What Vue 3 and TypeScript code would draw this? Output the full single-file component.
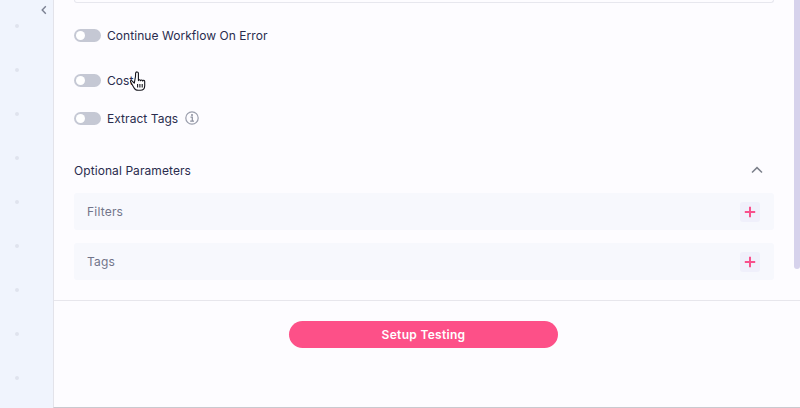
<template>
  <div class="page">
    <!-- 左侧栏 -->
    <aside class="sidebar">
      <span v-for="n in 9" :key="n" class="dot"></span>
      <svg class="collapse" width="8" height="10" viewBox="0 0 8 10" fill="none">
        <path d="M5.8 1.2 2.2 5l3.6 3.8" stroke="#7b8092" stroke-width="1.4" />
      </svg>
    </aside>

    <main class="main">
      <div class="form">
        <div class="input-stub"></div>

        <div class="toggle-row first">
          <span class="toggle"><span class="knob"></span></span>
          <span class="label">Continue Workflow On Error</span>
        </div>
        <div class="toggle-row second">
          <span class="toggle"><span class="knob"></span></span>
          <span class="label">Cost</span>
        </div>
        <div class="toggle-row third">
          <span class="toggle"><span class="knob"></span></span>
          <span class="label">Extract Tags</span>
          <svg class="info" width="14" height="14" viewBox="0 0 14 14" fill="none">
            <circle cx="7" cy="7" r="6.2" stroke="#9a9eac" stroke-width="1.2" />
            <path d="M5.5 6.2H7.3V10M5.2 10.2h3.8" stroke="#8b8f9e" stroke-width="1.2" />
            <circle cx="7" cy="3.9" r="1" fill="#8b8f9e" />
          </svg>
        </div>

        <div class="section-head">
          <span class="section-title">Optional Parameters</span>
          <svg width="12" height="8" viewBox="0 0 12 8" fill="none">
            <path d="M1 6.5 6 1.6l5 4.9" stroke="#7c808b" stroke-width="1.5" />
          </svg>
        </div>

        <div v-for="item in params" :key="item" class="param">
          <span>{{ item }}</span>
          <span class="add">
            <svg width="12" height="12" viewBox="0 0 12 12" fill="none">
              <path d="M6 .8v10.4M.8 6h10.4" stroke="#f8508c" stroke-width="2" />
            </svg>
          </span>
        </div>
      </div>

      <div class="footer">
        <button class="primary" type="button">Setup Testing</button>
      </div>

      <!-- 滚动条 -->
      <div class="scrollbar"></div>

      <!-- 鼠标指针 -->
      <svg class="cursor" width="16" height="20" viewBox="0 0 16 20">
        <path
          d="M4.3 12.2 2 9.8c-.9-.8-1.9.2-1.3 1.2l3.1 5.4c.9 1.6 2.2 2.9 4.3 2.9h2.3c2.7 0 4.3-1.9 4.3-4.6v-4.3c0-1.4-1.8-1.5-2-.3 0-1.4-1.9-1.5-2.2-.3 0-1.4-1.9-1.4-2.1-.2V2.2C8.4.6 5.9.4 5.6 2.2l-.1 3.3Z"
          fill="#fff"
          stroke="#15151c"
          stroke-width="1.1"
          stroke-linejoin="round"
        />
        <path d="M7.6 13v3.4M9.9 13v3.4M12.2 13v3.4" stroke="#15151c" stroke-width="1.1" />
      </svg>
    </main>
  </div>
</template>

<script setup lang="ts">
const params: string[] = ['Filters', 'Tags']
</script>

<style>
html,
body {
  margin: 0;
  background: #fdfcff;
}
</style>

<style scoped>
.page {
  display: flex;
  width: 800px;
  height: 408px;
  overflow: hidden;
  font-family: Inter, 'Liberation Sans', sans-serif;
}

/* ==================== 左侧栏 ==================== */
.sidebar {
  position: relative;
  box-sizing: border-box;
  flex: 0 0 53px;
  display: flex;
  flex-direction: column;
  align-items: flex-start;
  gap: 40px;
  padding: 24px 0 0 15px;
  background: #f0f4fd;
}

.dot {
  flex: none;
  width: 4px;
  height: 4px;
  border-radius: 50%;
  background: #e0e3ee;
}

.collapse {
  position: absolute;
  top: 5px;
  left: 40px;
}

/* ==================== 主区域 ==================== */
.main {
  position: relative;
  flex: 1;
  display: flex;
  flex-direction: column;
  box-sizing: border-box;
  border-left: 1px solid #e3e3ea;
  border-bottom: 1px solid #c9c9cf;
  background: #fdfcff;
}

.form {
  box-sizing: border-box;
  height: 301px;
  padding: 0 26px 0 20px;
  border-bottom: 1px solid #e7e6ec;
}

.input-stub {
  box-sizing: border-box;
  height: 3px;
  border: 1px solid #e7e7ee;
  border-top: none;
  border-radius: 0 0 4px 4px;
}

.toggle-row {
  display: flex;
  align-items: center;
  gap: 6px;
  height: 20px;
}

.toggle-row.first {
  margin-top: 22px;
}

.toggle-row.second {
  margin-top: 25px;
}

.toggle-row.third {
  margin-top: 18px;
}

.toggle {
  display: flex;
  align-items: center;
  box-sizing: border-box;
  width: 27px;
  height: 13px;
  padding-left: 2px;
  border-radius: 7px;
  background: #c5c8d4;
}

.knob {
  width: 9px;
  height: 9px;
  border-radius: 50%;
  background: #fff;
}

.label {
  font-size: 12px;
  font-weight: 400;
  letter-spacing: 0.05px;
  color: #2a2c4e;
}

.info {
  margin-left: 1px;
}

.section-head {
  display: flex;
  align-items: center;
  justify-content: space-between;
  height: 20px;
  margin: 32px 5px 13px 0;
  padding-right: 6px;
}

.section-title {
  font-size: 12px;
  font-weight: 400;
  letter-spacing: 0.08px;
  color: #2a2c4e;
}

.param {
  display: flex;
  align-items: center;
  justify-content: space-between;
  box-sizing: border-box;
  height: 37px;
  margin-bottom: 13px;
  padding: 0 14px 0 13px;
  border-radius: 3px;
  background: #f7f8fd;
  font-size: 12px;
  letter-spacing: 0.2px;
  color: #72758a;
}

.add {
  display: flex;
  align-items: center;
  justify-content: center;
  width: 20px;
  height: 20px;
  border-radius: 3px;
  background: #f0f0fb;
}

/* ==================== 底部 ==================== */
.footer {
  flex: 1;
  display: flex;
  justify-content: center;
  align-items: flex-start;
  padding: 20px 7px 0 0;
}

.primary {
  width: 269px;
  height: 27px;
  padding: 0;
  border: none;
  border-radius: 14px;
  background: #fd5088;
  color: #fff;
  font-family: inherit;
  font-size: 12px;
  font-weight: 600;
  letter-spacing: 0.3px;
}

.scrollbar {
  position: absolute;
  top: 0;
  right: 0;
  width: 6px;
  height: 269px;
  border-radius: 0 0 3px 3px;
  background: #d6d2ec;
}

.cursor {
  position: absolute;
  top: 71px;
  left: 76px;
}
</style>
